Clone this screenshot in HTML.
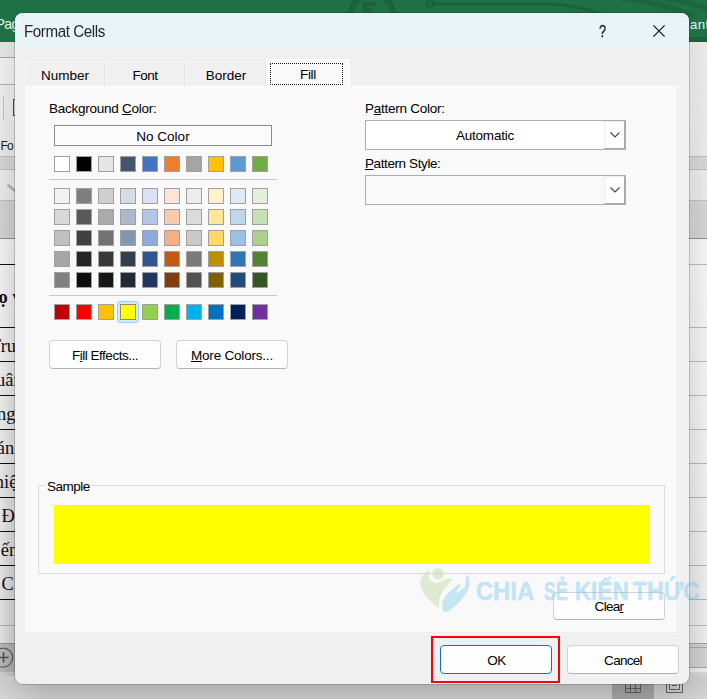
<!DOCTYPE html>
<html lang="en">
<head>
<meta charset="utf-8">
<title>Format Cells</title>
<style>
html,body{margin:0;padding:0;}
body{width:707px;height:699px;position:relative;overflow:hidden;background:#e6e6e6;font-family:"Liberation Sans","DejaVu Sans",sans-serif;font-size:13px;color:#000;}
.abs{position:absolute;}
/* ---------- backdrop (excel window) ---------- */
#xl-top{left:0;top:0;width:707px;height:42px;background:#1f7145;}
#xl-ribbon{left:0;top:42px;width:707px;height:160px;background:#f3f3f3;}
#xl-sheet{left:0;top:202px;width:707px;height:497px;background:#ffffff;}
.wt{color:#e8f1ec;font-size:14.2px;line-height:16px;white-space:nowrap;letter-spacing:-0.6px;}
.cell{font-family:"Liberation Serif","DejaVu Serif",serif;font-size:18.5px;line-height:20px;color:#111;white-space:nowrap;margin-top:.6px;}
.hl{left:0;width:15px;height:1px;background:#111;}
.rl{left:689px;width:18px;height:1px;background:#c2c2c2;}
/* ---------- dialog ---------- */
#shadow{left:15px;top:13px;width:674px;height:671px;border-radius:8px;box-shadow:0 0 0 1px rgba(0,0,0,.17);}
.shl{left:0;top:42px;width:15px;height:634px;background:linear-gradient(to right,rgba(0,0,0,.12),rgba(0,0,0,.25));-webkit-mask-image:linear-gradient(to bottom,rgba(0,0,0,.3),#000 87%);mask-image:linear-gradient(to bottom,rgba(0,0,0,.3),#000 87%);}
.shr{left:689px;top:42px;width:18px;height:634px;background:linear-gradient(to left,rgba(0,0,0,.08),rgba(0,0,0,.17));-webkit-mask-image:linear-gradient(to bottom,rgba(0,0,0,.45),#000 87%);mask-image:linear-gradient(to bottom,rgba(0,0,0,.45),#000 87%);}
.shb{left:0;top:676px;width:707px;height:23px;background:linear-gradient(to bottom,rgba(0,0,0,.24) 8px,rgba(0,0,0,.17));-webkit-mask-image:linear-gradient(to right,rgba(0,0,0,.5),#000 45px,#000 662px,rgba(0,0,0,.5));mask-image:linear-gradient(to right,rgba(0,0,0,.5),#000 45px,#000 662px,rgba(0,0,0,.5));}
#dlg{left:15px;top:13px;width:674px;height:671px;border-radius:8px;background:#f0f0f0;overflow:hidden;}
#title{left:0;top:0;width:674px;height:37px;background:#e9f4f8;}
#title .t{left:9px;top:9.5px;font-size:16px;color:#262626;white-space:nowrap;letter-spacing:-0.45px;transform:scaleX(.948);transform-origin:0 0;}
#panel{left:10px;top:73px;width:653px;height:547px;box-shadow:1px 1px 0 1px #f4f4f4;background:#f9f9f9;border:1px solid #fdfdfd;border-right-color:#ececec;border-bottom-color:#ececec;box-sizing:border-box;}
.tab{top:48px;height:25px;box-sizing:border-box;border-left:1px solid #f8f8f8;border-top:1px solid #f7f7f7;border-right:1px solid #e2e2e2;background:#f0f0f0;text-align:center;line-height:28px;font-size:13.5px;}
.tab.sel{top:46px;height:28px;background:#f9f9f9;border:1px solid #fff;border-bottom:none;line-height:30px;letter-spacing:-0.3px;}
.lbl{white-space:nowrap;font-size:13.5px;line-height:16px;margin-top:1px;letter-spacing:-0.25px;}
u{text-decoration:underline;text-underline-offset:0.5px;text-decoration-thickness:1px;}
.sw{width:16px;height:16px;box-sizing:border-box;border:1px solid #a0a0a0;}
.btn{box-sizing:border-box;border:1px solid #cfd2d7;border-bottom-color:#adb3bd;border-radius:4px;background:#fdfdfd;text-align:center;font-size:13.5px;letter-spacing:-0.2px;}
.cbtn{width:21px;height:28px;box-sizing:border-box;border:1px solid #ededed;border-right-color:#a6a9af;border-bottom-color:#a6a9af;background:#fdfdfd;}
.wm{top:576px;font-weight:bold;font-size:26.5px;line-height:30px;color:#6ec3ee;-webkit-text-stroke:0.7px #6ec3ee;opacity:.38;white-space:nowrap;transform-origin:0 0;}
.combo{box-sizing:border-box;border:1px solid #abadb3;background:#fff;}
</style>
</head>
<body>
<!-- backdrop -->
<div class="abs" id="xl-top"></div>
<svg class="abs" style="left:0;top:0" width="707" height="42" viewBox="0 0 707 42">
  <g fill="none" stroke="#1b6139" stroke-linecap="round">
    <circle cx="372" cy="14.5" r="21" stroke-width="5.4"/>
    <path d="M363.5 4 H376 M364.5 4 V12 M364.5 9.5 H372" stroke-width="3.6" stroke-linecap="butt"/>
    <circle cx="430" cy="3.5" r="3.4" stroke-width="2.6"/>
    <path d="M434 4 L548 4 Q578 4.5 602 14.5" stroke-width="3"/>
    <path d="M612 -3 Q655 1 692 15" stroke-width="5" stroke="#1c663d"/>
    <path d="M655 -3 Q690 1 712 11" stroke-width="5" stroke="#1c663d"/>
  </g>
  <rect x="689" y="37" width="18" height="5" fill="#1c6139"/>
</svg>
<div class="abs" id="xl-ribbon"></div>
<div class="abs" id="xl-sheet"></div>
<!-- ribbon fragments -->
<div class="abs" style="left:0;top:42px;width:15px;height:15px;background:#ebebeb;border-bottom:1px solid #a9a9a9;"></div>
<div class="abs" style="left:0;top:58px;width:15px;height:26px;background:#f6f6f6;border-bottom:1px solid #b4b4b4;"></div>
<div class="abs" style="left:3px;top:96px;width:1px;height:24px;background:#c6c6c6;"></div>
<div class="abs" style="left:12.6px;top:98.6px;width:6px;height:17.4px;box-sizing:border-box;border:1.4px solid #4a4a4a;"></div>
<div class="abs" style="left:0.4px;top:139px;font-size:12px;line-height:14px;letter-spacing:-0.7px;color:#222;">Fo</div>
<div class="abs" style="left:0;top:156px;width:707px;height:14px;background:#dedede;border-top:1px solid #c4c4c4;border-bottom:1px solid #c4c4c4;box-sizing:border-box;"></div>
<svg class="abs" style="left:0;top:180px" width="20" height="16" viewBox="0 0 20 16"><path d="M8.5 5.5 L16 11.5" stroke="#bababa" stroke-width="2.8" stroke-linecap="round" fill="none"/></svg>
<div class="abs" style="left:0;top:200px;width:707px;height:39px;background:#dcdcdc;border-top:1px solid #c8c8c8;border-bottom:1px solid #979797;box-sizing:border-box;"></div>
<!-- sheet grid -->
<div class="abs hl" style="top:264px"></div><div class="abs hl" style="top:327px"></div><div class="abs hl" style="top:361px"></div><div class="abs hl" style="top:395px"></div><div class="abs hl" style="top:429px"></div><div class="abs hl" style="top:463px"></div><div class="abs hl" style="top:497px"></div><div class="abs hl" style="top:531px"></div><div class="abs hl" style="top:565px"></div><div class="abs hl" style="top:599px"></div>
<div class="abs rl" style="top:264px"></div><div class="abs rl" style="top:327px"></div><div class="abs rl" style="top:361px"></div><div class="abs rl" style="top:395px"></div><div class="abs rl" style="top:429px"></div><div class="abs rl" style="top:463px"></div><div class="abs rl" style="top:497px"></div><div class="abs rl" style="top:531px"></div><div class="abs rl" style="top:565px"></div><div class="abs rl" style="top:599px"></div>
<div class="abs" style="left:0;top:625px;width:707px;height:1px;background:#c8c8c8;"></div>
<div class="abs cell" style="left:-1.5px;top:286.4px;font-weight:bold">ọ v</div>
<div class="abs cell" style="left:-10px;top:335.3px">Trung</div>
<div class="abs cell" style="left:-4px;top:369.6px">uân</div>
<div class="abs cell" style="left:-3px;top:403.4px">ng</div>
<div class="abs cell" style="left:-3.2px;top:437.2px">án</div>
<div class="abs cell" style="left:-5.2px;top:471.3px">hiệu</div>
<div class="abs cell" style="left:1.5px;top:505.0px">Đ</div>
<div class="abs cell" style="left:0.8px;top:539.5px">ến</div>
<div class="abs cell" style="left:1.5px;top:573.8px">C</div>
<!-- sheet tab bar + status bar -->
<div class="abs" style="left:0;top:643px;width:15px;height:29px;background:#cfcfcf;border-top:1px solid #a6a6a6;box-sizing:border-box;"></div>
<svg class="abs" style="left:-8px;top:646px" width="24" height="24" viewBox="0 0 24 24"><circle cx="11.2" cy="11.6" r="9.5" fill="none" stroke="#6a6a6a" stroke-width="1.2"/><path d="M6.5 11.5 H16.5 M11.5 6.5 V16.5" stroke="#555" stroke-width="1.6" fill="none"/></svg>
<div class="abs" style="left:689px;top:643px;width:18px;height:25px;background:#e2e2e2;border-top:1px solid #b0b0b0;border-bottom:1px solid #b0b0b0;box-sizing:border-box;"></div>
<div class="abs" style="left:689px;top:647px;width:18px;height:1px;background:#b8b8b8;"></div>
<div class="abs" style="left:0;top:672px;width:707px;height:27px;background:#e9e9e9;"></div>
<div class="abs" style="left:612px;top:672px;width:42px;height:27px;background:#b9b9b9;"></div>
<svg class="abs" style="left:625px;top:678px" width="16" height="15" viewBox="0 0 16 15"><path d="M0.5 0.5 H15.5 V14.5 H0.5 Z M0.5 5.5 H15.5 M0.5 10.5 H15.5 M5.5 0.5 V14.5 M10.5 0.5 V14.5" stroke="#6b6b6b" stroke-width="1" fill="none"/></svg>
<svg class="abs" style="left:666px;top:680px" width="18" height="15" viewBox="0 0 18 15"><path d="M0.5 0 V12.5 H16.5 V0 M3.5 0 V9.5 H13.5 V0 M6 2.5 H11 M6 5.5 H11" stroke="#6b6b6b" stroke-width="1" fill="none"/></svg>
<div class="abs wt" style="left:-4.6px;top:15.6px;">Pag</div>
<div class="abs wt" style="left:689.9px;top:17.3px;font-size:13.2px;letter-spacing:0.5px;">ant</div>

<!-- dialog -->
<div class="abs shl"></div><div class="abs shr"></div><div class="abs shb"></div>
<div class="abs" id="shadow"></div>
<div class="abs" id="dlg">
  <div class="abs" id="title"><div class="abs t">Format Cells</div>
    <div class="abs" style="left:584px;top:10px;font-size:16px;color:#1b1b1b;-webkit-text-stroke:.3px #1b1b1b;transform:scaleX(.8);transform-origin:0 0;">?</div>
    <svg class="abs" style="left:637px;top:11px;" width="14" height="14" viewBox="0 0 14 14"><path d="M1.4 1.4 L12.6 12.6 M12.6 1.4 L1.4 12.6" stroke="#1b1b1b" stroke-width="1.3" fill="none"/></svg>
  </div>
  <!-- tabs -->
  <div class="abs tab" style="left:10px;width:80px;">Number</div>
  <div class="abs tab" style="left:90px;width:80px;letter-spacing:-0.5px;">Font</div>
  <div class="abs tab" style="left:170px;width:81px;text-indent:1px;">Border</div>
  <div class="abs" id="panel"></div>
  <div class="abs tab sel" style="left:251px;width:84px;">Fill</div>
  <div class="abs" style="left:255px;top:50px;width:73px;height:22px;box-sizing:border-box;border:1px dotted #222;"></div>

  <!-- left column -->
  <div class="abs lbl" style="left:34px;top:87px;">Background <u>C</u>olor:</div>
  <div class="abs" style="left:39px;top:112px;width:218px;height:21px;box-sizing:border-box;border:1px solid #8a8a8a;background:#fbfbfb;text-align:center;line-height:21px;font-size:13.5px;">No Color</div>
  <!-- theme colours -->
  <div class="abs sw" style="left:39px;top:143px;background:#ffffff"></div>
  <div class="abs sw" style="left:61px;top:143px;background:#000000"></div>
  <div class="abs sw" style="left:83px;top:143px;background:#e7e6e6"></div>
  <div class="abs sw" style="left:105px;top:143px;background:#44546a"></div>
  <div class="abs sw" style="left:127px;top:143px;background:#4472c4"></div>
  <div class="abs sw" style="left:149px;top:143px;background:#ed7d31"></div>
  <div class="abs sw" style="left:171px;top:143px;background:#a5a5a5"></div>
  <div class="abs sw" style="left:193px;top:143px;background:#ffc000"></div>
  <div class="abs sw" style="left:215px;top:143px;background:#5b9bd5"></div>
  <div class="abs sw" style="left:237px;top:143px;background:#70ad47"></div>
  <!-- tint row 1 -->
  <div class="abs sw" style="left:39px;top:175px;background:#f2f2f2"></div>
  <div class="abs sw" style="left:61px;top:175px;background:#7f7f7f"></div>
  <div class="abs sw" style="left:83px;top:175px;background:#d0cece"></div>
  <div class="abs sw" style="left:105px;top:175px;background:#d6dce4"></div>
  <div class="abs sw" style="left:127px;top:175px;background:#d9e1f2"></div>
  <div class="abs sw" style="left:149px;top:175px;background:#fce4d6"></div>
  <div class="abs sw" style="left:171px;top:175px;background:#ededed"></div>
  <div class="abs sw" style="left:193px;top:175px;background:#fff2cc"></div>
  <div class="abs sw" style="left:215px;top:175px;background:#ddebf7"></div>
  <div class="abs sw" style="left:237px;top:175px;background:#e2efda"></div>
  <!-- tint row 2 -->
  <div class="abs sw" style="left:39px;top:196px;background:#d9d9d9"></div>
  <div class="abs sw" style="left:61px;top:196px;background:#595959"></div>
  <div class="abs sw" style="left:83px;top:196px;background:#aeaaaa"></div>
  <div class="abs sw" style="left:105px;top:196px;background:#acb9ca"></div>
  <div class="abs sw" style="left:127px;top:196px;background:#b4c6e7"></div>
  <div class="abs sw" style="left:149px;top:196px;background:#f8cbad"></div>
  <div class="abs sw" style="left:171px;top:196px;background:#dbdbdb"></div>
  <div class="abs sw" style="left:193px;top:196px;background:#ffe699"></div>
  <div class="abs sw" style="left:215px;top:196px;background:#bdd7ee"></div>
  <div class="abs sw" style="left:237px;top:196px;background:#c6e0b4"></div>
  <!-- tint row 3 -->
  <div class="abs sw" style="left:39px;top:217px;background:#bfbfbf"></div>
  <div class="abs sw" style="left:61px;top:217px;background:#404040"></div>
  <div class="abs sw" style="left:83px;top:217px;background:#757171"></div>
  <div class="abs sw" style="left:105px;top:217px;background:#8497b0"></div>
  <div class="abs sw" style="left:127px;top:217px;background:#8ea9db"></div>
  <div class="abs sw" style="left:149px;top:217px;background:#f4b084"></div>
  <div class="abs sw" style="left:171px;top:217px;background:#c9c9c9"></div>
  <div class="abs sw" style="left:193px;top:217px;background:#ffd966"></div>
  <div class="abs sw" style="left:215px;top:217px;background:#9bc2e6"></div>
  <div class="abs sw" style="left:237px;top:217px;background:#a9d08e"></div>
  <!-- tint row 4 -->
  <div class="abs sw" style="left:39px;top:238px;background:#a6a6a6"></div>
  <div class="abs sw" style="left:61px;top:238px;background:#262626"></div>
  <div class="abs sw" style="left:83px;top:238px;background:#3a3838"></div>
  <div class="abs sw" style="left:105px;top:238px;background:#333f4f"></div>
  <div class="abs sw" style="left:127px;top:238px;background:#305496"></div>
  <div class="abs sw" style="left:149px;top:238px;background:#c65911"></div>
  <div class="abs sw" style="left:171px;top:238px;background:#7b7b7b"></div>
  <div class="abs sw" style="left:193px;top:238px;background:#bf8f00"></div>
  <div class="abs sw" style="left:215px;top:238px;background:#2f75b5"></div>
  <div class="abs sw" style="left:237px;top:238px;background:#548235"></div>
  <!-- tint row 5 -->
  <div class="abs sw" style="left:39px;top:259px;background:#808080"></div>
  <div class="abs sw" style="left:61px;top:259px;background:#0d0d0d"></div>
  <div class="abs sw" style="left:83px;top:259px;background:#161616"></div>
  <div class="abs sw" style="left:105px;top:259px;background:#222b35"></div>
  <div class="abs sw" style="left:127px;top:259px;background:#203764"></div>
  <div class="abs sw" style="left:149px;top:259px;background:#833c0c"></div>
  <div class="abs sw" style="left:171px;top:259px;background:#525252"></div>
  <div class="abs sw" style="left:193px;top:259px;background:#806000"></div>
  <div class="abs sw" style="left:215px;top:259px;background:#1f4e78"></div>
  <div class="abs sw" style="left:237px;top:259px;background:#375623"></div>
  <!-- standard colours -->
  <div class="abs sw" style="left:39px;top:291px;background:#c00000"></div>
  <div class="abs sw" style="left:61px;top:291px;background:#ff0000"></div>
  <div class="abs sw" style="left:83px;top:291px;background:#ffc000"></div>
  <div class="abs sw" style="left:105px;top:291px;background:#ffff00"></div>
  <div class="abs sw" style="left:127px;top:291px;background:#92d050"></div>
  <div class="abs sw" style="left:149px;top:291px;background:#00b050"></div>
  <div class="abs sw" style="left:171px;top:291px;background:#00b0f0"></div>
  <div class="abs sw" style="left:193px;top:291px;background:#0070c0"></div>
  <div class="abs sw" style="left:215px;top:291px;background:#002060"></div>
  <div class="abs sw" style="left:237px;top:291px;background:#7030a0"></div>
  <div class="abs" style="left:34px;top:166px;width:228px;height:1px;background:#c9c9c9;"></div>
  <div class="abs" style="left:34px;top:282px;width:228px;height:1px;background:#c9c9c9;"></div>
  <!-- selected swatch ring -->
  <div class="abs" style="left:102px;top:288px;width:22px;height:22px;box-sizing:border-box;border:1px solid #9ccffa;background:#d3eafc;border-radius:3px;"></div>
  <div class="abs sw" style="left:105px;top:291px;background:#ffff00;border-color:#8f8a7a;"></div>

  <div class="abs btn" style="left:34px;top:327px;width:112px;height:29px;line-height:30px;letter-spacing:-0.5px;">F<u>i</u>ll Effects...</div>
  <div class="abs btn" style="left:161px;top:327px;width:112px;height:29px;line-height:30px;"><u>M</u>ore Colors...</div>

  <!-- right column -->
  <div class="abs lbl" style="left:350px;top:87px;">P<u>a</u>ttern Color:</div>
  <div class="abs combo" style="left:350px;top:107px;width:261px;height:30px;"></div>
  <div class="abs" style="left:351px;top:108px;width:238px;height:28px;text-align:center;line-height:30px;font-size:13.5px;letter-spacing:-0.2px;">Automatic</div>
  <div class="abs cbtn" style="left:589px;top:108px;"></div>
  <svg class="abs" style="left:593.5px;top:118px;" width="12" height="8" viewBox="0 0 12 8"><path d="M1.5 1.5 L6 6 L10.5 1.5" stroke="#484848" stroke-width="1.2" fill="none"/></svg>
  <div class="abs lbl" style="left:350px;top:142px;letter-spacing:-0.4px;"><u>P</u>attern Style:</div>
  <div class="abs combo" style="left:350px;top:162px;width:261px;height:30px;background:#f9f9f9;"></div>
  <div class="abs cbtn" style="left:589px;top:163px;"></div>
  <svg class="abs" style="left:593.5px;top:173px;" width="12" height="8" viewBox="0 0 12 8"><path d="M1.5 1.5 L6 6 L10.5 1.5" stroke="#484848" stroke-width="1.2" fill="none"/></svg>

  <!-- sample -->
  <div class="abs" style="left:23px;top:472px;width:627px;height:89px;box-sizing:border-box;border:1px solid #dcdcdc;"></div>
  <div class="abs lbl" style="left:30px;top:465px;background:#f9f9f9;padding:0 2px;letter-spacing:-0.5px;">Sample</div>
  <div class="abs" style="left:39px;top:492px;width:595px;height:59px;background:#ffff00;"></div>

  <div class="abs btn" style="left:538px;top:579px;width:112px;height:28px;line-height:28px;letter-spacing:-0.7px;">Clea<u>r</u></div>

  <!-- bottom buttons -->
  <div class="abs btn" style="left:425px;top:632px;width:112px;height:29px;line-height:29px;border-color:#0a74cf;letter-spacing:-0.5px;text-indent:1px;">OK</div>
  <div class="abs btn" style="left:552px;top:632px;width:112px;height:29px;line-height:29px;letter-spacing:-0.7px;">Cancel</div>
  <div class="abs" style="left:416px;top:623px;width:129px;height:47px;box-sizing:border-box;border:2px solid #ff0000;"></div>
</div>
<!-- watermark -->
<svg class="abs" style="left:412px;top:560px" width="65" height="60" viewBox="412 560 65 60">
  <g fill="#b9d99c" fill-opacity=".42">
    <circle cx="438.2" cy="573.8" r="5.9"/>
    <path d="M428.6 570.4 C424.5 572.5 420.3 577 420.3 583 C420.6 593 431 602.5 438.9 608 C439.6 603.5 439 600 440.2 596.2 C442 590.5 447 586 452.9 579.2 C451.5 577.6 446 578.6 442.3 580.6 C439 582.6 435.5 583.4 433 582.2 C430 580.6 428.4 577.4 429.3 574 C429.7 572.4 430.2 571 428.6 570.4 Z"/>
  </g>
  <path fill="#8fd3f0" fill-opacity=".5" d="M443.6 611.8 C441.6 607 441.8 602.5 444 598.5 C447 593 453.5 588 458.6 584.3 C460 583.6 460.8 584.8 460 586 C458.5 588.4 456.2 590.6 455.2 592.8 C458.8 591.6 463 589 465.2 586.4 C466.2 583 465.6 578.5 466 575.4 C467.2 574.6 468.4 576 469 578 C470.6 583 469 588.5 466 593.5 C462 600 456.5 605.5 451 609.5 C448.5 611.2 445.8 612.4 443.6 611.8 Z"/>
</svg>
<div class="abs wm" style="left:475.8px;transform:scaleX(.902)">CHIA</div>
<div class="abs wm" style="left:543.7px;transform:scaleX(.679)">SẺ</div>
<div class="abs wm" style="left:574.9px;transform:scaleX(.853)">KIẾN</div>
<div class="abs wm" style="left:633px;transform:scaleX(.875)">THỨC</div>
</body>
</html>
